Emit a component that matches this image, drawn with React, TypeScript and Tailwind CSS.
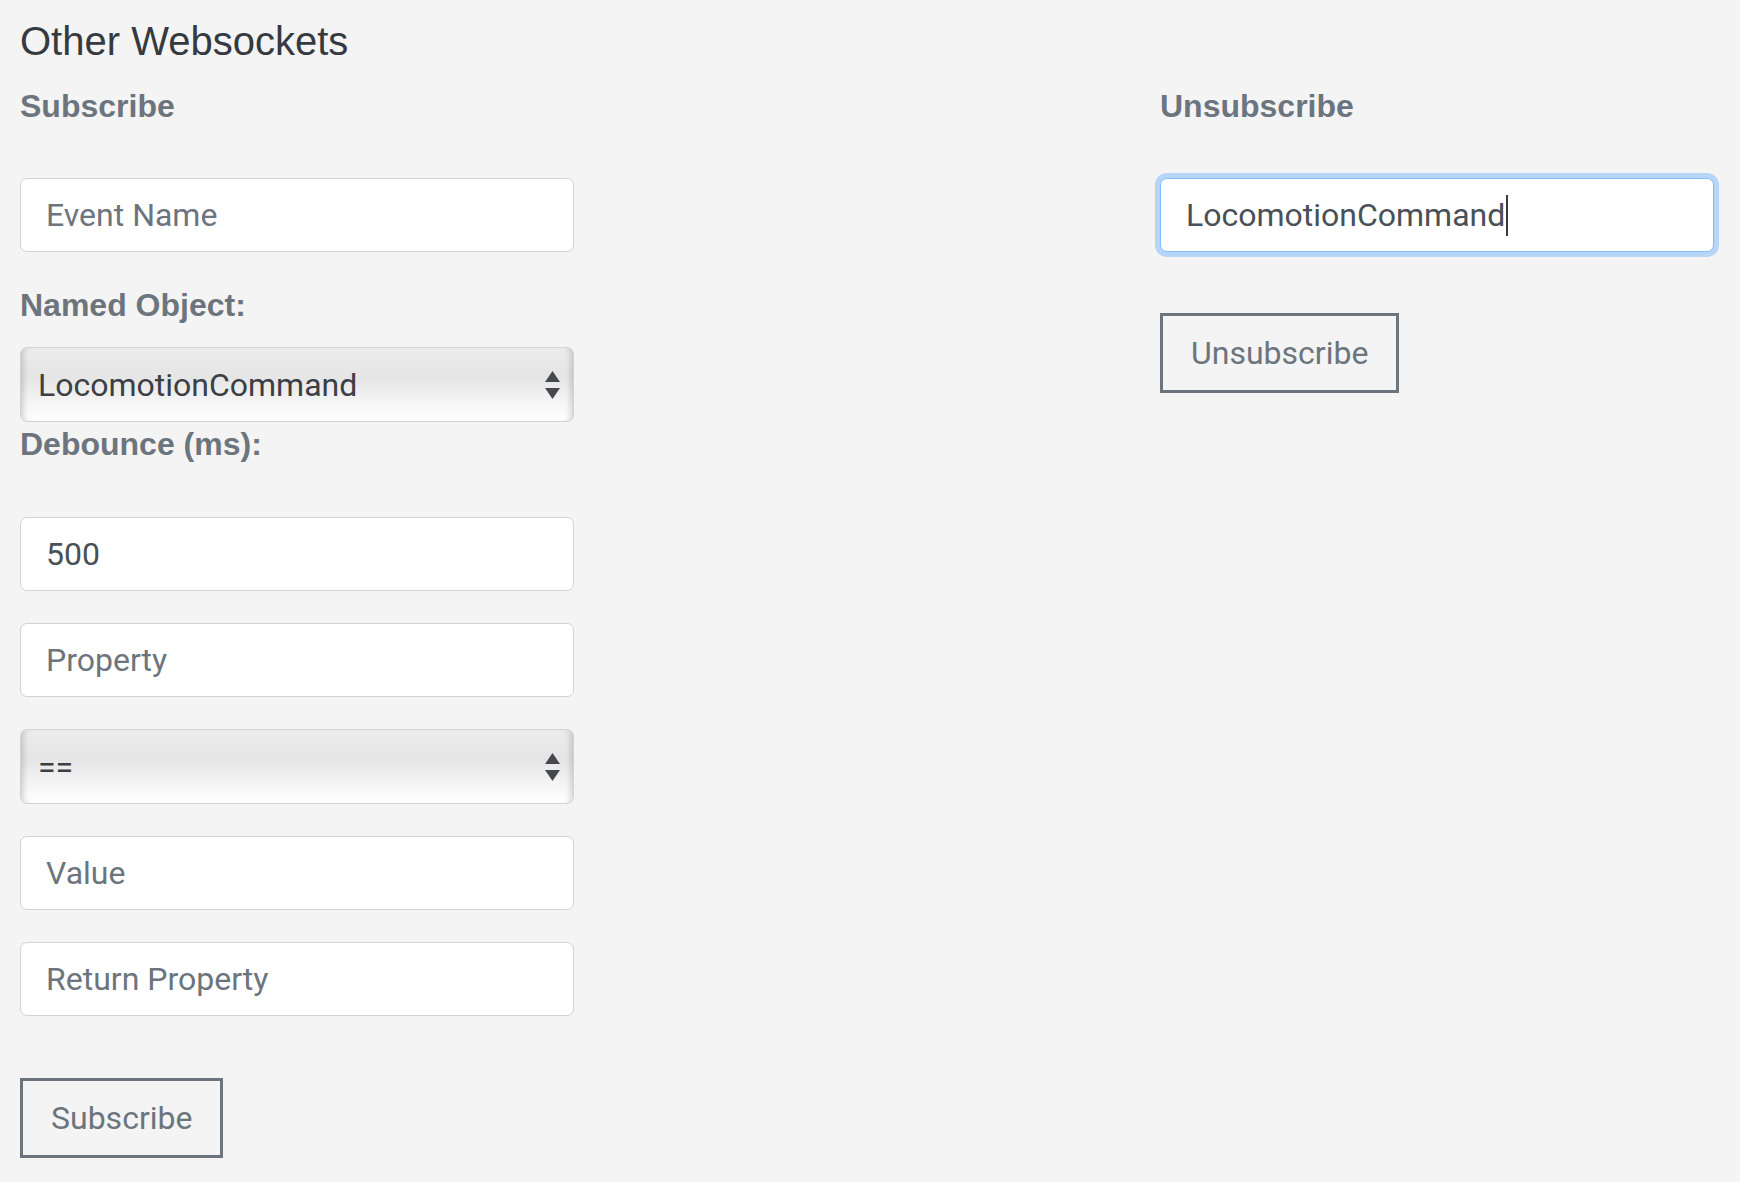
import React from "react";

const LABEL =
  "block font-['Liberation_Sans',Arial,sans-serif] text-[32px] leading-[38px] font-bold text-[#6c757d]";
const FIELD_FONT = "font-['Roboto','Liberation_Sans',Arial,sans-serif] text-[32px] leading-[48px]";

function TextInput({ placeholder, value, className = "" }: { placeholder?: string; value?: string; className?: string }) {
  return (
    <input
      readOnly
      defaultValue={value}
      placeholder={placeholder}
      className={`${FIELD_FONT} block h-[74px] w-full rounded-[7px] border border-[#ced4da] bg-white px-[25px] text-[#495057] outline-none placeholder:text-[#6c757d] ${className}`}
    />
  );
}

function FakeSelect({ value, className = "" }: { value: string; className?: string }) {
  return (
    <div
      className={`${FIELD_FONT} relative flex h-[75px] w-full items-center rounded-[7px] border border-[#ced4da] bg-[linear-gradient(to_bottom,#ececec_0%,#e5e5e5_40%,#f3f3f3_70%,#ffffff_100%)] pl-[17px] text-[#3b3f44] shadow-[inset_7px_0_6px_-5px_rgba(0,0,0,0.18),inset_-7px_0_6px_-5px_rgba(0,0,0,0.18)] ${className}`}
    >
      <span>{value}</span>
      <svg
        className="absolute right-[13px] top-1/2 -translate-y-1/2"
        width="15"
        height="28"
        viewBox="0 0 15 28"
      >
        <polygon points="7.5,0 15,11 0,11" fill="#45494e" />
        <polygon points="0,17 15,17 7.5,28" fill="#45494e" />
      </svg>
    </div>
  );
}

function OutlineButton({ children, className = "" }: { children: React.ReactNode; className?: string }) {
  return (
    <button
      type="button"
      className={`${FIELD_FONT} flex h-[80px] w-fit items-center border-[3px] border-[#6c757d] bg-transparent px-[28px] text-[#6c757d] ${className}`}
    >
      {children}
    </button>
  );
}

export default function App() {
  return (
    <div className="min-h-[1182px] w-full bg-[#f4f4f4] pl-[20px] pt-[18px]">
      <h3 className="font-['Liberation_Sans',Arial,sans-serif] text-[40px] leading-[46px] text-[#343a40]">
        Other Websockets
      </h3>
      <div className="mt-[23px] grid grid-cols-[554px_554px] items-start gap-x-[586px]">
        <div className="flex flex-col">
          <label className={LABEL}>Subscribe</label>
          <TextInput className="mt-[53px]" placeholder="Event Name" />
          <label className={`${LABEL} mt-[34px]`}>Named Object:</label>
          <FakeSelect className="mt-[23px]" value="LocomotionCommand" />
          <label className={`${LABEL} mt-[3px]`}>Debounce (ms):</label>
          <TextInput className="mt-[54px]" value="500" />
          <TextInput className="mt-[32px]" placeholder="Property" />
          <FakeSelect className="mt-[32px]" value="==" />
          <TextInput className="mt-[32px]" placeholder="Value" />
          <TextInput className="mt-[32px]" placeholder="Return Property" />
          <OutlineButton className="mt-[62px]">Subscribe</OutlineButton>
        </div>
        <div className="flex flex-col">
          <label className={LABEL}>Unsubscribe</label>
          <div
            className={`${FIELD_FONT} mt-[53px] flex h-[74px] w-full items-center rounded-[7px] border border-[#80bdff] bg-white px-[25px] text-[#495057] shadow-[0_0_0_5px_rgba(0,123,255,0.25)]`}
          >
            <span>LocomotionCommand</span>
            <span className="ml-[1px] inline-block h-[41px] w-[2px] bg-[#3a3a3a]" />
          </div>
          <OutlineButton className="mt-[61px]">Unsubscribe</OutlineButton>
        </div>
      </div>
    </div>
  );
}
